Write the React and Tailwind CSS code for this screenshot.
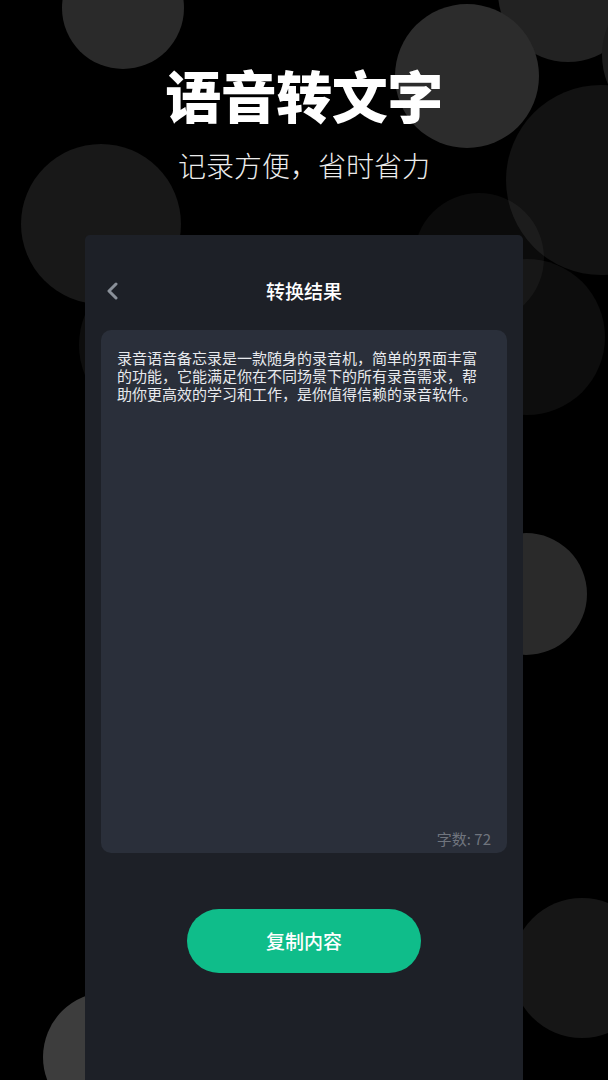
import React from "react";

const circles = [
  { cx: 568, cy: -8, r: 70, fill: "#222222", o: 1 },
  { cx: 677, cy: 55, r: 75, fill: "#1c1c1c", o: 1 },
  { cx: 123, cy: 8, r: 61, fill: "#2a2a2a", o: 1 },
  { cx: 601, cy: 180, r: 95, fill: "#ffffff", o: 0.07 },
  { cx: 467, cy: 76, r: 72, fill: "#2c2c2c", o: 1 },
  { cx: 101, cy: 224, r: 80, fill: "#181818", o: 1 },
  { cx: 479, cy: 258, r: 65, fill: "#ffffff", o: 0.045 },
  { cx: 527, cy: 337, r: 78, fill: "#ffffff", o: 0.05 },
  { cx: 159, cy: 345, r: 80, fill: "#ffffff", o: 0.05 },
  { cx: 526, cy: 594, r: 61, fill: "#2a2a2a", o: 1 },
  { cx: 582, cy: 968, r: 70, fill: "#161616", o: 1 },
  { cx: 108, cy: 1057, r: 65, fill: "#3d3d3d", o: 1 },
];

export default function App() {
  return (
    <div className="relative w-[608px] h-[1080px] overflow-hidden bg-black font-['Noto_Sans_CJK_SC','Noto_Sans',sans-serif]">
      <svg className="absolute inset-0" width="608" height="1080" viewBox="0 0 608 1080">
        {circles.map((c, i) => (
          <circle key={i} cx={c.cx} cy={c.cy} r={c.r} fill={c.fill} fillOpacity={c.o} />
        ))}
      </svg>

      <div className="relative flex h-full flex-col items-center">
        <h1 className="mt-[62px] text-[56px] font-black leading-[64px] tracking-[-0.5px] text-white">
          语音转文字
        </h1>
        <p className="mt-[21px] text-[28px] font-extralight leading-[36px] text-[#ececec]">
          记录方便，省时省力
        </p>

        <div className="mt-[52px] flex w-[438px] flex-1 flex-col rounded-t-[5px] bg-[#1d2027] px-4">
          <div className="mt-[40px] grid h-[32px] grid-cols-[40px_1fr_40px] items-center">
            <svg className="ml-[4px]" width="14" height="18" viewBox="0 0 14 18" fill="none">
              <path
                d="M11 2 L4 9 L11 16"
                stroke="#8a9099"
                strokeWidth="3"
                strokeLinecap="round"
                strokeLinejoin="round"
              />
            </svg>
            <span className="text-center text-[19px] font-medium leading-[32px] text-white">转换结果</span>
            <span />
          </div>

          <div className="mt-[23px] flex h-[523px] flex-col justify-between rounded-[10px] bg-[#2a2f3a] pb-[5px] pl-4 pr-4 pt-[19px]">
            <p className="w-[362px] text-[15px] leading-[18px] text-[#e8eaee]">
              录音语音备忘录是一款随身的录音机，简单的界面丰富的功能，它能满足你在不同场景下的所有录音需求，帮助你更高效的学习和工作，是你值得信赖的录音软件。
            </p>
            <p className="text-right text-[15px] leading-[18px] text-[#70757e]">字数: 72</p>
          </div>

          <div className="mt-[56px] flex justify-center">
            <button className="h-[64px] w-[234px] rounded-full bg-[#0fbd8a] text-[19px] font-medium text-white">
              复制内容
            </button>
          </div>
        </div>
      </div>
    </div>
  );
}
